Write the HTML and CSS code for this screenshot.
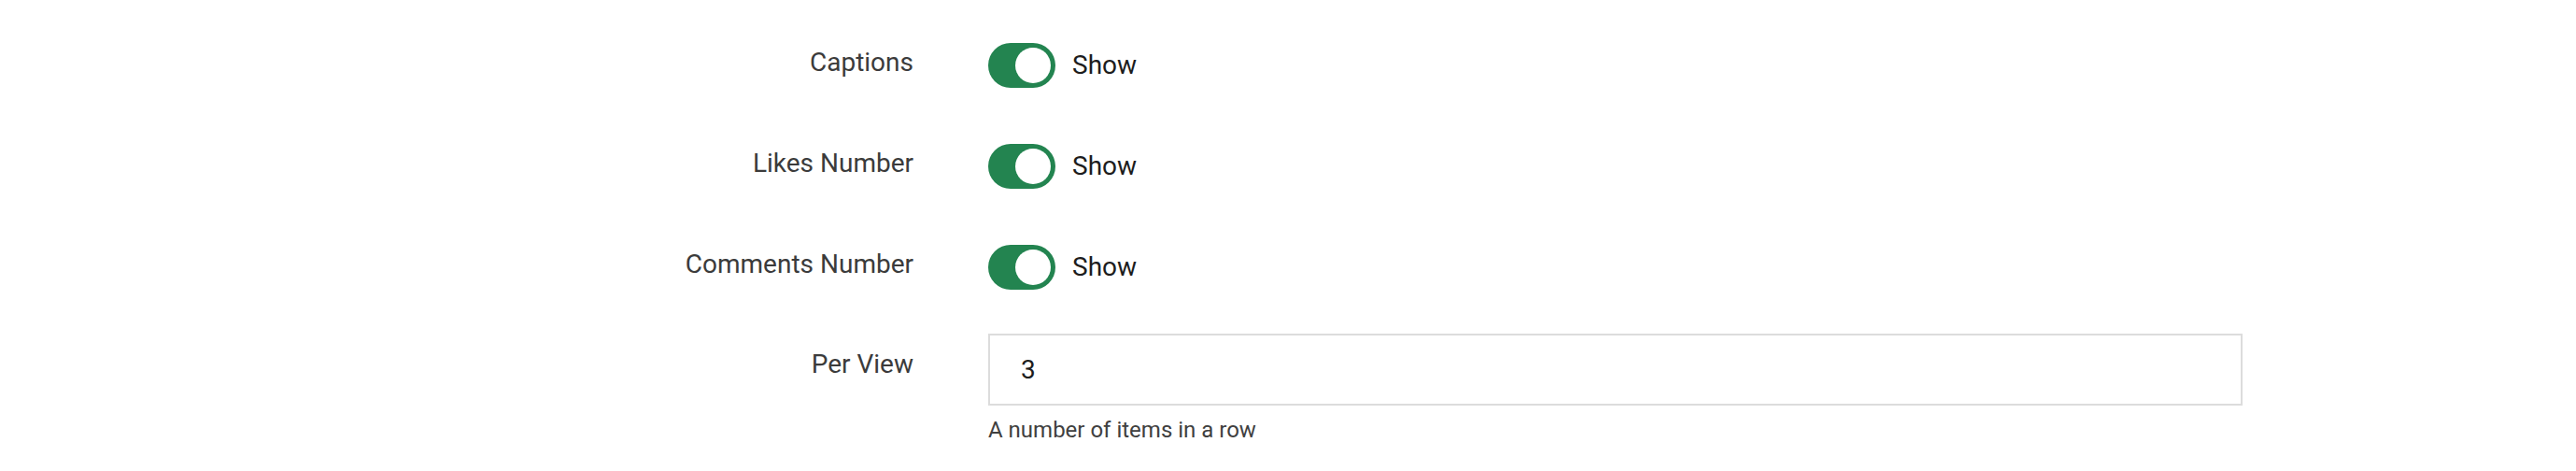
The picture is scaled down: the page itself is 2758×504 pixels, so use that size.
FILE: index.html
```html
<html>
<head>
<link rel="stylesheet" href="styles.css">
</head>
<body>
<form class="settings">
  <div class="field-row">
    <label class="field-label">Captions</label>
    <div class="field-control">
      <span class="toggle"><span class="toggle-knob"></span></span>
      <span class="toggle-text">Show</span>
    </div>
  </div>
  <div class="field-row">
    <label class="field-label">Likes Number</label>
    <div class="field-control">
      <span class="toggle"><span class="toggle-knob"></span></span>
      <span class="toggle-text">Show</span>
    </div>
  </div>
  <div class="field-row">
    <label class="field-label">Comments Number</label>
    <div class="field-control">
      <span class="toggle"><span class="toggle-knob"></span></span>
      <span class="toggle-text">Show</span>
    </div>
  </div>
  <div class="field-row input-row">
    <label class="field-label">Per View</label>
    <div class="field-stack">
      <input class="text-input" type="text" value="3" />
      <p class="field-help">A number of items in a row</p>
    </div>
  </div>
</form>
</body>
</html>
```

FILE: styles.css
```css
* {
  box-sizing: border-box;
  margin: 0;
  padding: 0;
}

body {
  background: #ffffff;
  font-family: Roboto, "Noto Sans", sans-serif;
}

.settings {
  padding-top: 46px;
  padding-left: 558px;
}

.field-row {
  display: grid;
  grid-template-columns: 420px 1343px;
  column-gap: 80px;
  align-items: start;
}

.field-row + .field-row {
  margin-top: 60px;
}

.field-row.input-row {
  margin-top: 47px;
}

.field-label {
  text-align: right;
  font-size: 28px;
  line-height: 42px;
  color: #3b3b3b;
}

.input-row .field-label {
  margin-top: 12px;
}

.field-control {
  display: flex;
  align-items: center;
  gap: 18px;
  height: 48px;
}

.toggle {
  display: flex;
  justify-content: flex-end;
  align-items: center;
  width: 72px;
  height: 48px;
  padding: 5px;
  border-radius: 24px;
  background: #238450;
}

.toggle-knob {
  width: 38px;
  height: 38px;
  border-radius: 50%;
  background: #ffffff;
}

.toggle-text {
  font-size: 28px;
  line-height: 48px;
  color: #1d1d1d;
}

.text-input {
  display: block;
  width: 100%;
  height: 77px;
  border: 2px solid #dcdcdc;
  padding-left: 33px;
  font-family: Roboto, "Noto Sans", sans-serif;
  font-size: 28px;
  color: #1d1d1d;
  background: #ffffff;
  outline: none;
}

.field-help {
  margin-top: 12px;
  font-size: 24px;
  line-height: 28px;
  color: #404040;
}
```
